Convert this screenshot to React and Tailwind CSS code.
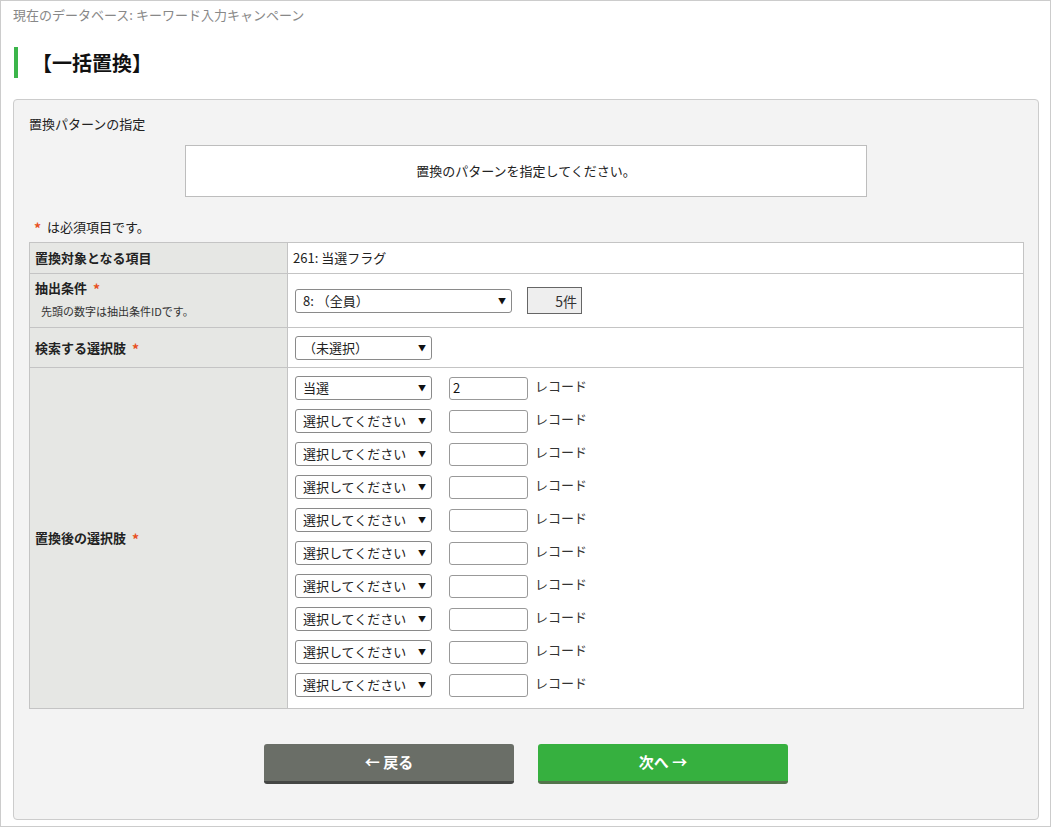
import React from "react";

const font = { fontFamily: '"Noto Sans CJK JP", "Noto Sans", sans-serif' };

function Sel({ w, text }) {
  return (
    <div className={`relative h-[24px] ${w} shrink-0`}>
      <div className="flex h-full w-full items-center rounded-[3px] border border-[#8a8a8a] bg-white pl-[7px] text-[13px] leading-[18px] text-[#222]">
        <span className="whitespace-nowrap">{text}</span>
      </div>
      <span className="pointer-events-none absolute right-[6px] top-[7px] text-[8px] leading-[10px] text-[#111]">▼</span>
    </div>
  );
}

function Star() {
  return <span className="ml-[6px] inline-block h-[18px] align-top text-[14px] font-bold leading-[20px] text-[#e8501e]">*</span>;
}

export default function App() {
  const rows = [
    "当選",
    "選択してください",
    "選択してください",
    "選択してください",
    "選択してください",
    "選択してください",
    "選択してください",
    "選択してください",
    "選択してください",
    "選択してください",
  ];
  return (
    <div style={font} className="h-[827px] w-[1051px] overflow-hidden border border-[#cccccc] bg-white text-[#333]">
      <div className="pl-[12px] pt-[5px] text-[13px] leading-[18px] text-[#888]">
        現在のデータベース: キーワード入力キャンペーン
      </div>
      <div className="ml-[13px] mt-[23px] flex h-[31px] items-center border-l-4 border-[#3bb54a] pl-[14px]">
        <h1 className="text-[20px] font-bold leading-[28px] text-[#111]">【一括置換】</h1>
      </div>
      <div className="ml-[12px] mt-[21px] w-[1026px] rounded-[4px] border border-[#cccccc] bg-[#f3f3f3] px-[15px] pb-[35px] pt-[15px]">
        <div className="text-[13px] leading-[18px] text-[#222]">置換パターンの指定</div>
        <div className="mx-auto mt-[12px] flex h-[52px] w-[682px] items-center justify-center border border-[#bdbdbd] bg-white text-[13px] leading-[18px] text-[#222]">
          置換のパターンを指定してください。
        </div>
        <div className="mt-[21px] flex h-[18px] items-center pl-[5px] text-[13px] leading-[18px] text-[#222]">
          <span className="mr-[6px] inline-block h-[18px] text-[14px] font-bold leading-[20px] text-[#e8501e]">*</span>
          <span>は必須項目です。</span>
        </div>
        <div className="mt-[6px] w-[995px] border border-[#c4c4c4] bg-white text-[13px] leading-[18px]">
          <div className="flex h-[30px]">
            <div className="flex w-[258px] shrink-0 items-center border-r border-[#c4c4c4] bg-[#e6e7e4] pl-[5px] font-bold text-[#222]">
              置換対象となる項目
            </div>
            <div className="flex items-center pl-[5px] text-[#222]">261: 当選フラグ</div>
          </div>
          <div className="flex h-[54px] border-t border-[#c4c4c4]">
            <div className="w-[258px] shrink-0 border-r border-[#c4c4c4] bg-[#e6e7e4] pl-[5px] pt-[5px]">
              <div className="h-[18px] font-bold text-[#222]">
                抽出条件<Star />
              </div>
              <div className="mt-[7px] pl-[6px] text-[11px] leading-[14px] text-[#333]">先頭の数字は抽出条件IDです。</div>
            </div>
            <div className="flex items-center pl-[7px]">
              <Sel w="w-[217px]" text="8: （全員）" />
              <div className="ml-[15px] flex h-[27px] w-[55px] items-center justify-end border border-[#666] bg-[#eeeeee] pr-[4px] text-[14px] text-[#333]">
                5件
              </div>
            </div>
          </div>
          <div className="flex h-[40px] border-t border-[#c4c4c4]">
            <div className="flex w-[258px] shrink-0 items-center border-r border-[#c4c4c4] bg-[#e6e7e4] pl-[5px] font-bold text-[#222]">
              <span>検索する選択肢</span><Star />
            </div>
            <div className="flex items-center pl-[7px]">
              <Sel w="w-[137px]" text="（未選択）" />
            </div>
          </div>
          <div className="flex h-[341px] border-t border-[#c4c4c4]">
            <div className="flex w-[258px] shrink-0 items-center border-r border-[#c4c4c4] bg-[#e6e7e4] pl-[5px] font-bold text-[#222]">
              <span>置換後の選択肢</span><Star />
            </div>
            <div className="flex flex-col gap-[9px] pl-[7px] pt-[8px]">
              {rows.map((t, i) => (
                <div key={i} className="flex h-[24px] items-center">
                  <Sel w="w-[137px]" text={t} />
                  <div className="ml-[17px] flex h-[23px] w-[79px] items-center rounded-[3px] border border-[#999] bg-white pl-[3px] text-[13px] text-[#111]">
                    {i === 0 ? "2" : ""}
                  </div>
                  <span className="ml-[7px] -mt-[4px] text-[13px] text-[#333]">レコード</span>
                </div>
              ))}
            </div>
          </div>
        </div>
        <div className="mt-[35px] flex justify-center gap-[24px]">
          <button className="flex h-[40px] w-[250px] items-center justify-center rounded-[3px] border-b-[3px] border-[#444644] bg-[#6a6e67] text-[15px] font-bold text-white">
            ← 戻る
          </button>
          <button className="flex h-[40px] w-[250px] items-center justify-center rounded-[3px] border-b-[3px] border-[#53744b] bg-[#36b03f] text-[15px] font-bold text-white">
            次へ →
          </button>
        </div>
      </div>
    </div>
  );
}
